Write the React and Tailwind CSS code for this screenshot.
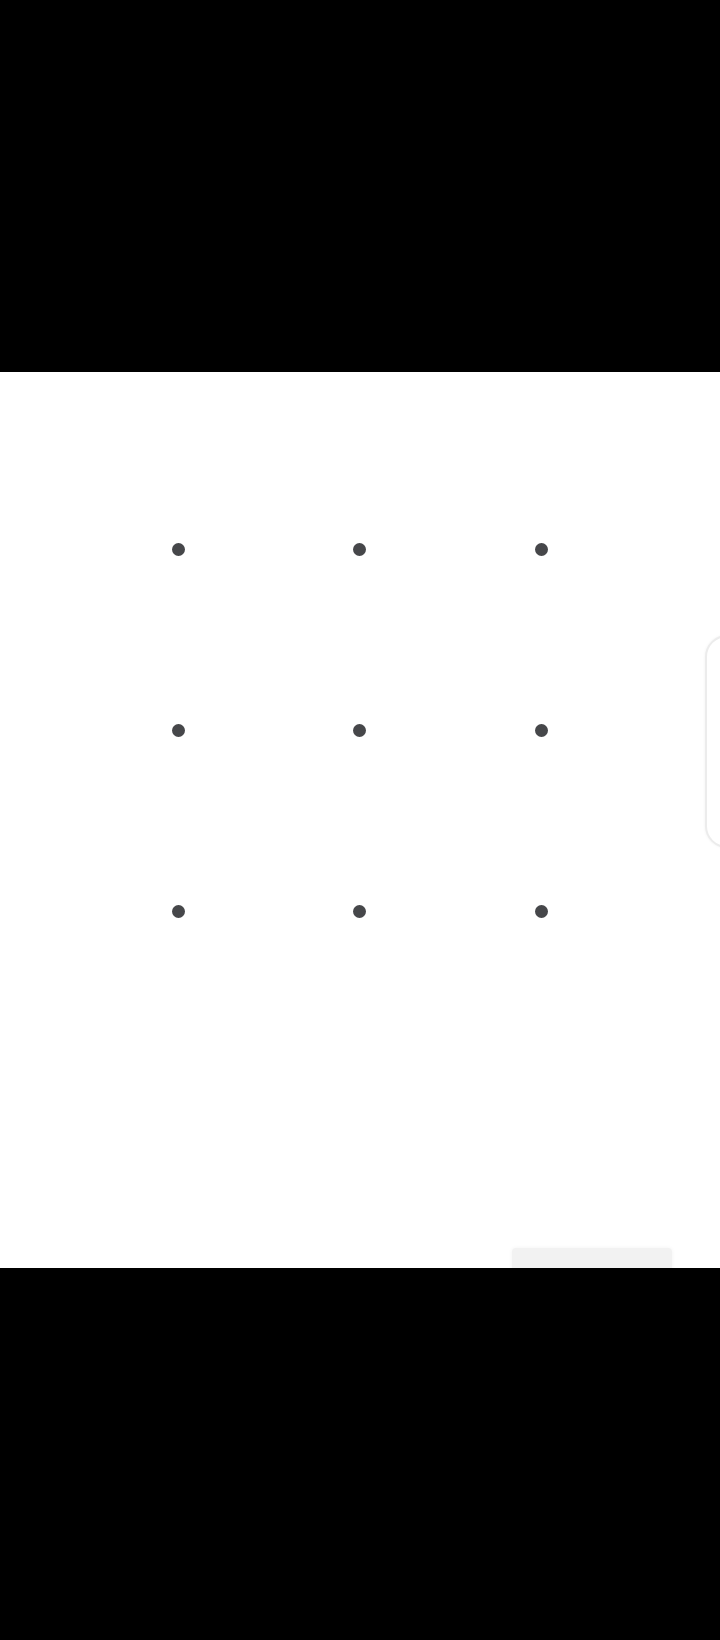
import React from "react";

const dots = [0, 1, 2, 3, 4, 5, 6, 7, 8];

const App = () => {
  return (
    <div className="w-[720px] h-[1640px] flex flex-col bg-black">
      <div className="h-[372px] bg-black" />
      <div className="relative h-[896px] bg-white overflow-hidden">
        <div className="pt-[87px] pl-[88px]">
          <div className="grid grid-cols-3 w-[544px]">
            {dots.map((d) => (
              <div key={d} className="h-[181px] flex items-center justify-center">
                <div className="w-[13px] h-[13px] rounded-full bg-[#46474a]" />
              </div>
            ))}
          </div>
        </div>
        <div className="absolute left-[705px] top-[263px] w-[60px] h-[213px] rounded-[22px] border-2 border-[#ececec] bg-white shadow-[0_0_3px_rgba(0,0,0,0.06)]" />
        <div className="absolute left-[512px] top-[876px] w-[160px] h-[24px] rounded-t-[4px] bg-[#f2f2f2] shadow-[0_0_4px_rgba(0,0,0,0.05)]" />
      </div>
      <div className="h-[372px] bg-black" />
    </div>
  );
};

export default App;
